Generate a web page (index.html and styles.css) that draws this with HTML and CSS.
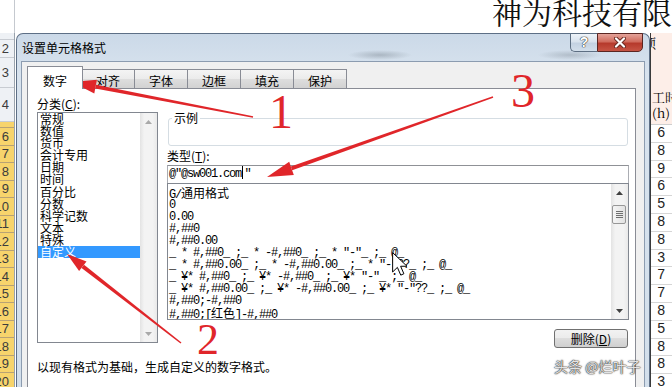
FILE: index.html
```html
<!DOCTYPE html>
<html lang="zh-CN">
<head>
    <meta charset="UTF-8">
    <title>设置单元格格式</title>
    <link rel="stylesheet" href="styles.css">
</head>
<body>
<div class="screen">
    <div class="topbar">
        <div class="topbar-stub"></div>
        <div class="sheet-title">神为科技有限</div>
    </div>

    <div class="workspace">
        <!-- row headers of the sheet behind the dialog -->
        <div class="row-heads">
            <div class="rh h7"></div>
            <div class="rh h18">2</div>
            <div class="rh h30">3</div>
            <div class="rh h34">4</div>
            <div class="rh hi h6"></div>
            <div class="rh hi">6</div>
            <div class="rh hi">7</div>
            <div class="rh hi">8</div>
            <div class="rh hi">9</div>
            <div class="rh hi">10</div>
            <div class="rh hi">11</div>
            <div class="rh hi">12</div>
            <div class="rh hi">13</div>
            <div class="rh hi">14</div>
            <div class="rh hi">15</div>
            <div class="rh hi">16</div>
            <div class="rh hi">17</div>
            <div class="rh hi">18</div>
            <div class="rh hi">19</div>
            <div class="rh hi">20</div>
        </div>

        <div class="dialog">
            <div class="titlebar">
                <span class="title">设置单元格格式</span>
                <div class="caption-btns">
                    <div class="cap-help">?</div>
                    <div class="cap-close">
                        <svg width="12" height="11" viewBox="0 0 12 11">
                            <path d="M2 1.5 L10 9.5 M10 1.5 L2 9.5" stroke="#6a2a22" stroke-width="4" stroke-linecap="round"/>
                            <path d="M2 1.5 L10 9.5 M10 1.5 L2 9.5" stroke="#fff" stroke-width="2.2" stroke-linecap="round"/>
                        </svg>
                    </div>
                </div>
            </div>

            <div class="client">
                <div class="tabs">
                    <div class="tab active">数字</div>
                    <div class="tab">对齐</div>
                    <div class="tab">字体</div>
                    <div class="tab">边框</div>
                    <div class="tab">填充</div>
                    <div class="tab">保护</div>
                </div>

                <div class="panel">
                    <div class="cols">
                        <div class="cat-col">
                            <div class="lbl">分类(<u>C</u>):</div>
                            <div class="listbox">
                                <div class="cat-items">
                                    <div class="item">常规</div>
                                    <div class="item">数值</div>
                                    <div class="item">货币</div>
                                    <div class="item">会计专用</div>
                                    <div class="item">日期</div>
                                    <div class="item">时间</div>
                                    <div class="item">百分比</div>
                                    <div class="item">分数</div>
                                    <div class="item">科学记数</div>
                                    <div class="item">文本</div>
                                    <div class="item">特殊</div>
                                    <div class="item sel">自定义</div>
                                </div>
                                <div class="vscroll off">
                                    <div class="arrow"><svg width="7" height="4"><path d="M0 4 L3.5 0 L7 4 Z"/></svg></div>
                                    <div class="arrow"><svg width="7" height="4"><path d="M0 0 L7 0 L3.5 4 Z"/></svg></div>
                                </div>
                            </div>
                        </div>

                        <div class="fmt-col">
                            <fieldset class="sample">
                                <legend>示例</legend>
                                <div class="sample-box"></div>
                            </fieldset>
                            <div class="lbl">类型(<u>T</u>):</div>
                            <div class="type-input">@"@sw001.com<span class="caret"></span>"</div>
                            <div class="fmt-list">
                                <div class="fmt-items">
                                    <div class="fmt">G/<span class="cj">通用格式</span></div>
                                    <div class="fmt">0</div>
                                    <div class="fmt">0.00</div>
                                    <div class="fmt">#,##0</div>
                                    <div class="fmt">#,##0.00</div>
                                    <div class="fmt">_ * #,##0_ ;_ * -#,##0_ ;_ * "-"_ ;_ @_</div>
                                    <div class="fmt">_ * #,##0.00_ ;_ * -#,##0.00_ ;_ * "-"??_ ;_ @_</div>
                                    <div class="fmt">_ ¥* #,##0_ ;_ ¥* -#,##0_ ;_ ¥* "-"_ ;_ @_</div>
                                    <div class="fmt">_ ¥* #,##0.00_ ;_ ¥* -#,##0.00_ ;_ ¥* "-"??_ ;_ @_</div>
                                    <div class="fmt">#,##0;-#,##0</div>
                                    <div class="fmt">#,##0;[<span class="cj">红色</span>]-#,##0</div>
                                </div>
                                <div class="vscroll">
                                    <div class="arrow"><svg width="7" height="4"><path d="M0 4 L3.5 0 L7 4 Z"/></svg></div>
                                    <div class="thumb"><span></span><span></span><span></span><span></span></div>
                                    <div class="arrow"><svg width="7" height="4"><path d="M0 0 L7 0 L3.5 4 Z"/></svg></div>
                                </div>
                            </div>
                            <div class="btn-row">
                                <div class="btn">删除(<u>D</u>)</div>
                            </div>
                        </div>
                    </div>
                    <p class="desc">以现有格式为基础，生成自定义的数字格式。</p>
                </div>
            </div>
        </div>

        <!-- hours column of the sheet -->
        <div class="hours">
            <div class="hours-head">
                <div class="clip-char">项</div>
                <div class="head-txt">工时</div>
                <div class="head-txt">(h)</div>
            </div>
            <div class="hr">6</div>
            <div class="hr">8</div>
            <div class="hr">9</div>
            <div class="hr">6</div>
            <div class="hr">5</div>
            <div class="hr">8</div>
            <div class="hr">8</div>
            <div class="hr">3</div>
            <div class="hr">7</div>
            <div class="hr">7</div>
            <div class="hr">8</div>
            <div class="hr">5</div>
            <div class="hr">8</div>
            <div class="hr">8</div>
            <div class="hr">3</div>
        </div>
    </div>

    <!-- red hand-drawn annotations and mouse pointer -->
    <svg class="marks" width="672" height="387" viewBox="0 0 672 387">
        <g fill="#e0262a">
            <polygon points="95.98,84.63 253.14,116.26 252.86,117.74 95.22,88.57"/>
            <polygon points="72,82 96.9,79.7 94.3,93.5"/>
            <polygon points="292.2,170.2 493.25,97.71 492.75,96.29 290.8,166.4"/>
            <polygon points="267,177 293.8,174.9 289.2,161.7"/>
            <polygon points="84.03,264.72 181.46,342.41 180.54,343.59 81.57,267.88"/>
            <polygon points="67,254 86.5,261.6 79.1,271"/>
            <text x="281" y="128" font-size="48" text-anchor="middle" class="num">1</text>
            <text x="523" y="107" font-size="48" text-anchor="middle" class="num">3</text>
            <text x="208" y="354" font-size="44" text-anchor="middle" class="num">2</text>
        </g>
        <path transform="translate(392,252) scale(1.25)" d="M0.5 0.5 V16 L4.3 12.3 L7 18.5 L9.5 17.4 L6.9 11.4 H12 Z" fill="#fff" stroke="#000" stroke-width="0.8"/>
    </svg>

    <div class="watermark">头条 @烂叶子</div>
</div>
</body>
</html>
```

FILE: styles.css
```css
* {
    margin: 0;
    padding: 0;
    box-sizing: border-box;
}

body {
    width: 672px;
    height: 387px;
    overflow: hidden;
    background: #fff;
    font-family: "Noto Sans CJK SC", sans-serif;
    font-size: 12px;
    color: #000;
}

.screen {
    position: relative;
    width: 672px;
    height: 387px;
    overflow: hidden;
    display: flex;
    flex-direction: column;
}

/* sheet behind */
.topbar {
    height: 33px;
    flex-shrink: 0;
    display: flex;
}

.topbar-stub {
    width: 15px;
    border-right: 1px solid #c5c9cf;
}

.sheet-title {
    margin-left: auto;
    margin-top: -4px;
    font-family: "Noto Serif CJK SC", "Noto Sans CJK SC", serif;
    font-size: 30px;
    line-height: 30px;
    white-space: nowrap;
    color: #111;
}

.workspace {
    flex: 1;
    display: flex;
    min-height: 0;
}

.row-heads {
    width: 15px;
    margin-right: 1px;
    border-right: 1px solid #9aa3ad;
    display: flex;
    flex-direction: column;
    overflow: hidden;
    background: #eef1f5;
    font-family: "Liberation Sans", sans-serif;
    font-size: 13px;
    color: #3c3c3c;
}

.rh {
    flex-shrink: 0;
    height: 17.5px;
    display: flex;
    justify-content: flex-end;
    align-items: center;
    padding-right: 5px;
    white-space: nowrap;
    overflow: hidden;
    border-bottom: 1px solid #c8ccd2;
}

.rh.h7 { height: 7px; }
.rh.h18 { height: 18px; }
.rh.h30 { height: 30px; }
.rh.h34 { height: 34px; }
.rh.h6 { height: 6px; }

.rh.hi {
    background: #f7d46c;
    border-bottom-color: #b8a274;
}

.hours {
    width: 22px;
    flex-shrink: 0;
    border-left: 1px solid #3a3a3a;
    overflow: hidden;
    font-family: "Noto Serif CJK SC", "Noto Sans CJK SC", serif;
    font-size: 13px;
}

.hours-head {
    height: 92px;
    background: #fdeee8;
    border-bottom: 1px solid #cfcfcf;
    display: flex;
    flex-direction: column;
    padding: 2px 0 3px 1px;
    white-space: nowrap;
}

.clip-char {
    margin-left: -9px;
    line-height: 16px;
    flex: 1;
}

.head-txt {
    line-height: 16px;
}

.hr {
    height: 17.8px;
    border-bottom: 1px solid #d6d6d6;
    padding-left: 6px;
    font-family: "Liberation Mono", monospace;
    font-size: 14px;
    line-height: 17px;
    color: #222;
}

/* dialog */
.dialog {
    width: 634px;
    flex-shrink: 0;
    display: flex;
    flex-direction: column;
    border: 1px solid #5d6f86;
    border-bottom: 0;
    border-radius: 7px 7px 0 0;
    padding: 0 4px;
    background: linear-gradient(#cbd9e8, #d8e3ee 40px, #d3dfeb);
}

.titlebar {
    height: 27px;
    flex-shrink: 0;
    display: flex;
    align-items: flex-start;
    background:
        radial-gradient(32px 5px at 359px 21px, rgba(80, 90, 100, .3), transparent),
        radial-gradient(32px 5px at 549px 21px, rgba(80, 90, 100, .25), transparent);
}

.title {
    padding-left: 1px;
    line-height: 27px;
    color: #000;
}

.caption-btns {
    margin-left: auto;
    margin-right: 2px;
    margin-top: -1px;
    display: flex;
}

.cap-help {
    width: 27px;
    height: 19px;
    border: 1px solid #5d6e82;
    border-right: 0;
    border-radius: 0 0 0 5px;
    background: linear-gradient(#eef3f8, #d9e3ee 45%, #c4d2e2 55%, #d3dfeb);
    text-align: center;
    font-family: "Liberation Sans", sans-serif;
    font-weight: bold;
    font-size: 14px;
    line-height: 17px;
    color: #fff;
    text-shadow: 0 0 1px #333, 0 0 1px #333, 0 0 1px #333;
}

.cap-close {
    width: 46px;
    height: 19px;
    border: 1px solid #5b2622;
    border-radius: 0 0 5px 0;
    background: linear-gradient(#e4a39a, #d06c5e 45%, #b63a2c 55%, #c65444);
    display: flex;
    align-items: center;
    justify-content: center;
}

.client {
    flex: 1;
    display: flex;
    flex-direction: column;
    background: #f0f0f0;
    border: 1px solid #8c9cb0;
    border-bottom: 0;
    padding-top: 4px;
}

.tabs {
    display: flex;
    align-items: flex-end;
    margin-left: 5px;
    height: 22px;
}

.tab {
    width: 54px;
    height: 19px;
    margin-left: -1px;
    border: 1px solid #898c95;
    border-bottom: 0;
    background: linear-gradient(#f4f4f4, #ebebeb 50%, #dedede 50%, #d2d2d2);
    text-align: center;
    padding-top: 3px;
    line-height: 15px;
}

.tab.active {
    position: relative;
    z-index: 1;
    width: 56px;
    height: 23px;
    margin-left: 0;
    margin-right: -1px;
    margin-bottom: -1px;
    background: #fff;
    padding-top: 6px;
    line-height: 16px;
}

.panel {
    flex: 1;
    margin: 0 8px 0 5px;
    background: #fff;
    border: 1px solid #898c95;
    border-bottom: 0;
    padding: 8px 6px 0 9px;
}

.cols {
    display: grid;
    grid-template-columns: 121px 1fr;
    column-gap: 9px;
}

.lbl {
    line-height: 14px;
}

.listbox {
    margin-top: 1px;
    height: 231px;
    border: 1px solid #828790;
    display: flex;
}

.cat-items {
    flex: 1;
}

.item {
    height: 12.1px;
    line-height: 12px;
    padding-left: 2px;
    white-space: nowrap;
}

.item.sel {
    background: #3399ff;
    color: #fff;
}

.vscroll {
    width: 17px;
    flex-shrink: 0;
    display: flex;
    flex-direction: column;
    background: linear-gradient(90deg, #e3e3e3, #f3f3f3 25%, #f3f3f3 75%, #e9e9e9);
}

.arrow {
    height: 17px;
    display: flex;
    align-items: center;
    justify-content: center;
    fill: #404040;
}

.arrow:last-child {
    margin-top: auto;
}

.vscroll.off .arrow {
    fill: #a9a9a9;
}

.thumb {
    margin: 4px 2px 0 1px;
    height: 19px;
    border: 1px solid #979797;
    border-radius: 2px;
    background: linear-gradient(90deg, #f5f5f5, #e2e2e2);
    display: flex;
    flex-direction: column;
    align-items: center;
    justify-content: center;
    gap: 1px;
}

.thumb span {
    width: 7px;
    height: 1px;
    background: #6f6f6f;
}

.sample {
    margin: 14px 1px 0 1px;
    border: 1px solid #d5dde3;
    border-radius: 3px;
    padding: 0;
}

.sample legend {
    margin-left: 3px;
    padding: 0 2px;
    line-height: 14px;
}

.sample-box {
    height: 20px;
}

.fmt-col .lbl {
    margin-top: 3px;
}

.type-input,
.fmt-items {
    font-family: "Liberation Mono", "Noto Sans CJK SC", monospace;
    font-size: 12px;
    letter-spacing: -1.2px;
}

.type-input {
    margin-top: 2px;
    height: 19px;
    border: 1px solid #abadb3;
    border-top-color: #8f9196;
    padding-left: 1px;
    line-height: 17px;
    white-space: pre;
}

.caret {
    display: inline-block;
    width: 1px;
    height: 13px;
    background: #000;
    vertical-align: -2px;
    margin: 0 1.2px;
}

.fmt-list {
    margin-top: -1px;
    height: 137px;
    border: 1px solid #828790;
    display: flex;
}

.fmt-items {
    flex: 1;
    padding: 3px 0 0 1px;
    overflow: hidden;
}

.fmt {
    height: 12px;
    line-height: 12px;
    white-space: pre;
}

.cj {
    font-family: "Noto Sans CJK SC", sans-serif;
    font-size: 12px;
    letter-spacing: 0;
}

.btn-row {
    display: flex;
    justify-content: flex-end;
    margin-top: 9px;
}

.btn {
    width: 74px;
    height: 19px;
    margin-right: 1px;
    border: 1px solid #707070;
    border-radius: 3px;
    background: linear-gradient(#f2f2f2, #ebebeb 50%, #dddddd 50%, #cfcfcf);
    text-align: center;
    line-height: 17px;
}

.desc {
    margin-top: 12px;
    line-height: 14px;
}

/* overlays */
.marks {
    position: absolute;
    left: 0;
    top: 0;
    pointer-events: none;
}

.num {
    font-family: "Liberation Serif", serif;
}

.watermark {
    position: absolute;
    left: 554px;
    top: 357px;
    font-size: 14px;
    line-height: 18px;
    white-space: nowrap;
    color: rgba(245, 245, 245, .92);
    text-shadow: 0 0 1px #333, 0 0 1px #333, 0 0 2px #555;
}
```
